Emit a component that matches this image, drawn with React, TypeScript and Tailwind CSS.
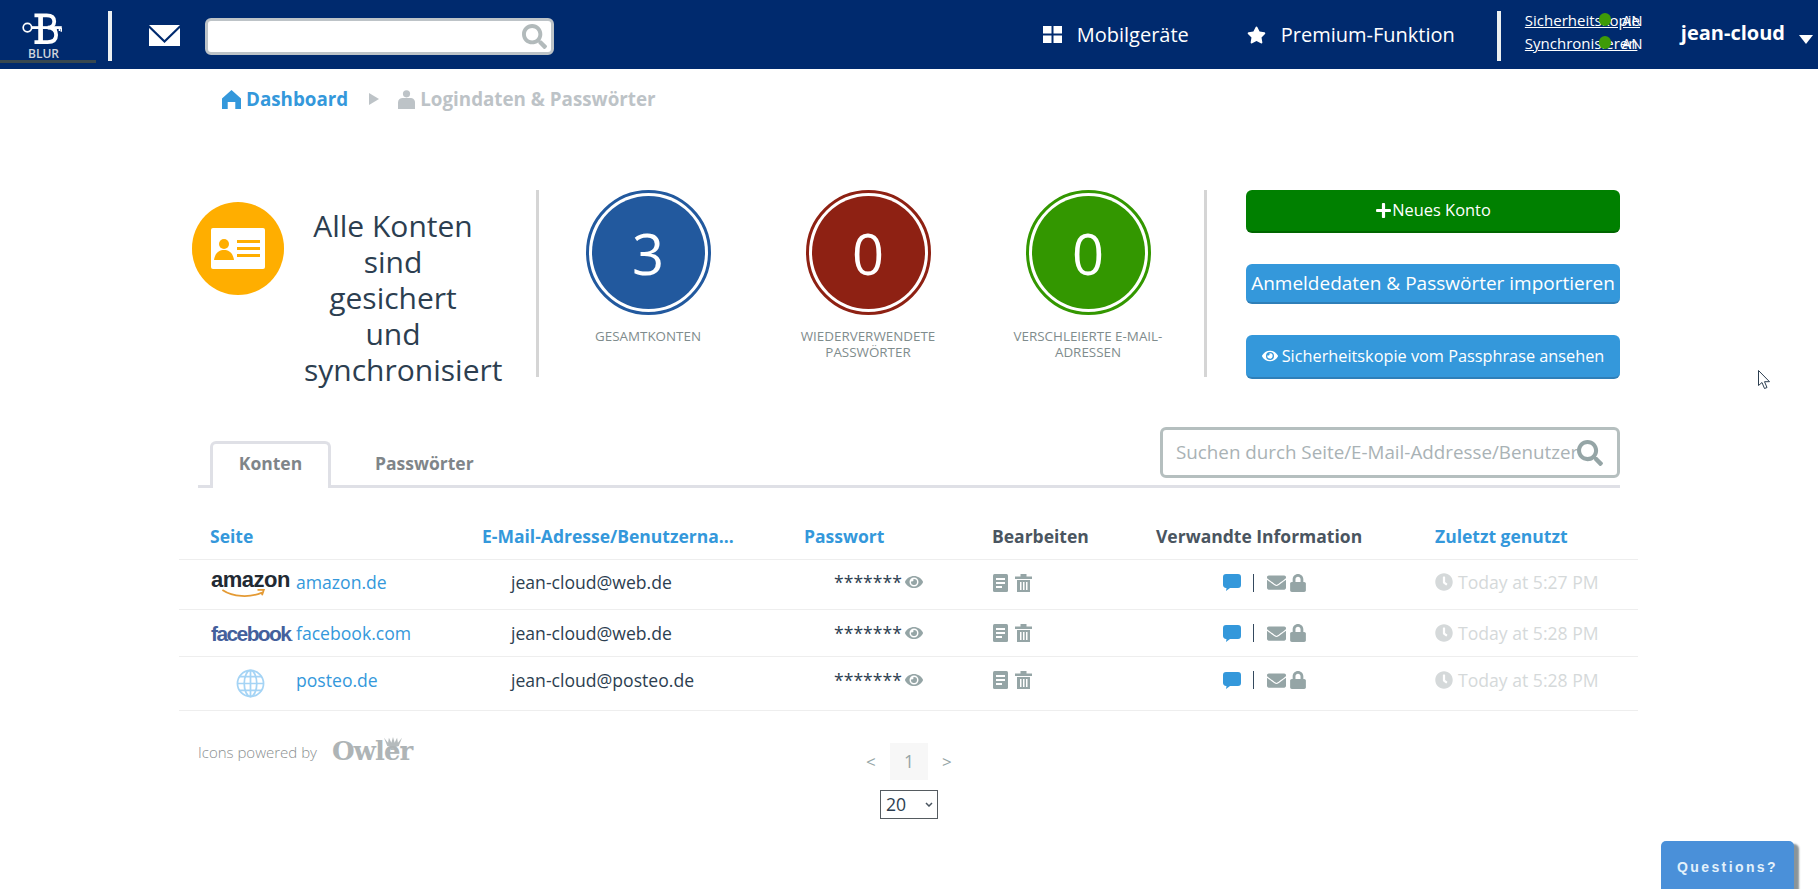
import React from 'react';
import { FaSearch, FaStar, FaEye, FaLock, FaClock, FaEnvelope, FaPlus } from 'react-icons/fa';

const rows = [
  { site: 'amazon.de', mail: 'jean-cloud@web.de', time: 'Today at 5:27 PM', logo: 'amazon', box: 'h-[50px] pb-[4px]' },
  { site: 'facebook.com', mail: 'jean-cloud@web.de', time: 'Today at 5:28 PM', logo: 'facebook', box: 'h-[47px]' },
  { site: 'posteo.de', mail: 'jean-cloud@posteo.de', time: 'Today at 5:28 PM', logo: 'globe', box: 'h-[54px] pb-[7px]' },
];

const stats = [
  { value: '3', label: 'Gesamtkonten', ring: 'border-[#22599e]', fill: 'bg-[#22599e]' },
  { value: '0', label: 'Wiederverwendete Passwörter', ring: 'border-[#8e2113]', fill: 'bg-[#8e2113]' },
  { value: '0', label: 'Verschleierte E-Mail-Adressen', ring: 'border-[#339700]', fill: 'bg-[#339700]' },
];

const BlurLogo = () => (
  <svg viewBox="0 0 42 34" className="mr-[3px] h-[34px] w-[42px]" fill="none" stroke="#fff">
    <circle cx="5.500" cy="15.500" r="4.500" strokeWidth="1.800" />
    <path d="M10 15.500h32" strokeWidth="3" />
    <path d="M36 16v4M39.500 16v3M41.500 16v4" strokeWidth="1.500" />
    <path d="M13 2.500h13c6 0 8 2.500 8 6.500s-3 6.500-7 6.500c6 0 9 3 9 8s-3 7.500-9 7.500H13" strokeWidth="4" />
    <path d="M19.500 2v30" strokeWidth="5" />
  </svg>
);

const HomeIcon = () => (
  <svg viewBox="0 0 20 20" className="h-[19px] w-[19px]" fill="#3498db">
    <path d="M10 0 20 9v11h-6v-7.500H6V20H0V9z" />
  </svg>
);

const UserIcon = () => (
  <svg viewBox="0 0 18 20" className="h-[19px] w-[17px]" fill="#bdc3c7">
    <circle cx="9" cy="4" r="3.800" />
    <path d="M0 20v-7c0-3 2.500-4.500 5-4.500h8c2.500 0 5 1.500 5 4.500v7z" />
  </svg>
);

const WindowsIcon = () => (
  <svg viewBox="0 0 19 17" className="h-[17px] w-[19px]" fill="#fff">
    <path d="M0 0h8.500v7.500H0zM10.500 0H19v7.500h-8.500zM0 9.500h8.500V17H0zM10.500 9.500H19V17h-8.500z" />
  </svg>
);

const MailIcon = () => (
  <svg viewBox="0 0 31 21" className="h-[21px] w-[31px]" fill="#fff">
    <path d="M0 0h31L15.500 15z" />
    <path d="M0 3l15.500 15L31 3v18H0z" />
  </svg>
);

const IdCardIcon = () => (
  <svg viewBox="0 0 54 41" className="h-[41px] w-[54px]">
    <rect width="54" height="41" rx="2" fill="#fff" />
    <circle cx="13" cy="16" r="5" fill="#ffae00" />
    <path d="M3 32c1-7 5-10 10-10s9 3 10 10z" fill="#ffae00" />
    <path d="M26 12h23v3H26zM26 19h23v3H26zM26 26h23v3H26z" fill="#ffae00" />
  </svg>
);

const DocIcon = () => (
  <svg viewBox="0 0 15 18" className="h-[18px] w-[15px]">
    <rect width="15" height="18" rx="1.500" fill="#95a5a6" />
    <path d="M3 4h9v2H3zM3 8h9v2H3zM3 12h6v2H3z" fill="#fff" />
  </svg>
);

const TrashIcon = () => (
  <svg viewBox="0 0 17 18" className="h-[18px] w-[17px]" fill="#95a5a6">
    <path d="M0 2.500h5.500V0h6v2.500H17V5H0zM2 6h13v12H2zM5 8v8h1.500V8zM8 8v8h1.500V8zM11 8v8h1.500V8z" fillRule="evenodd" />
  </svg>
);

const ChatIcon = () => (
  <svg viewBox="0 0 18 17" className="h-[17px] w-[18px]" fill="#3498db">
    <path d="M3 0h12a3 3 0 0 1 3 3v8a3 3 0 0 1-3 3H7l-4 3 .5-3A3 3 0 0 1 0 11V3a3 3 0 0 1 3-3z" />
  </svg>
);

const Globe = () => (
  <svg viewBox="0 0 30 30" className="h-[29px] w-[29px]" fill="none" stroke="#a5d4f5" strokeWidth="1.800">
    <circle cx="15" cy="15" r="13.500" />
    <ellipse cx="15" cy="15" rx="6.500" ry="13.500" />
    <path d="M15 1.500v27M1.500 15h27M3.500 8h23M3.500 22h23" />
  </svg>
);

const SiteLogo = ({ kind }: { kind: string }) => {
  if (kind === 'amazon') {
    return (
      <div className="relative h-[26px] w-[80px]">
        <span className="block font-['Liberation_Sans',sans-serif] text-[22px] font-bold leading-[19px] tracking-[-0.5px] text-[#222a33]">amazon</span>
        <svg viewBox="0 0 50 10" className="absolute left-[10px] top-[19px] h-[9px] w-[46px]" fill="none" stroke="#e49a34" strokeWidth="2">
          <path d="M1 1c12 8 30 9 44 3M40 1h7l-2 6" />
        </svg>
      </div>
    );
  }
  if (kind === 'facebook') {
    return (
      <span className="mt-[6px] block w-[80px] font-['Liberation_Sans',sans-serif] text-[21px] font-bold leading-[24px] tracking-[-1.6px] text-[#44609c]">
        facebook<span className="text-[10px] font-normal">.</span>
      </span>
    );
  }
  return (
    <div className="mt-[7px] flex w-[78px] justify-center">
      <Globe />
    </div>
  );
};

const OwlerLogo = () => (
  <div className="relative h-[28px] w-[84px]">
    <svg viewBox="0 0 22 16" className="absolute left-[54px] top-0 h-[15px] w-[18px]" fill="#b5bbbd">
      <path d="M0 1l5 6 1-6 3 6 2-7 2 7 3-6 1 6 5-6-4 10-3 1-1 4H8l-1-4-3-1z" />
    </svg>
    <span className="absolute bottom-0 left-[2px] font-['DejaVu_Serif',serif] text-[26px] font-bold leading-[26px] tracking-[-1px] text-[#aeb4b6]">Owler</span>
  </div>
);

const Cursor = () => (
  <svg viewBox="0 0 13 20" className="absolute left-[1758px] top-[370px] h-[20px] w-[13px]" fill="#fff" stroke="#2c3e50" strokeWidth="1">
    <path d="M.5.500v15l3.500-3 2.500 6 2.500-1-2.500-5.800h5z" />
  </svg>
);

export default function App() {
  return (
    <div className="relative h-[889px] overflow-hidden bg-white font-['Open_Sans',sans-serif] text-[#2c3e50]">
      {/* Top bar */}
      <header className="flex h-[69px] bg-[#002a6e] text-white">
        <div className="flex h-[63px] w-[96px] flex-col items-center border-b-[3px] border-[#37474f] pr-[9px] pt-[13px]">
          <BlurLogo />
          <span className="mt-[3px] text-[12px] font-semibold leading-[12px] text-[#cfd6dd]">BLUR</span>
        </div>
        <div className="ml-[12px] mt-[11px] h-[50px] w-[4px] bg-[#ecf0f1]" />
        <div className="ml-[37px] mt-[25px]">
          <MailIcon />
        </div>
        <div className="ml-[25px] mt-[18px] flex h-[37px] w-[349px] items-center justify-end rounded-[6px] border-[3px] border-[#bdc3c7] bg-white pr-[4px]">
          <FaSearch className="h-[25px] w-[25px] text-[#b2babb]" />
        </div>
        <div className="ml-auto flex">
          <div className="flex items-center gap-[15px]">
            <WindowsIcon />
            <span className="text-[20px]">Mobilgeräte</span>
          </div>
          <div className="ml-[58px] flex items-center gap-[15px]">
            <FaStar className="h-[18px] w-[19px]" />
            <span className="text-[20px]">Premium-Funktion</span>
          </div>
          <div className="ml-[42px] mt-[11px] h-[50px] w-[4px] bg-[#ecf0f1]" />
          <div className="ml-[24px] mt-[11px] flex flex-col gap-[5px] text-[15px] leading-[18px]">
            <div className="relative w-[118px] whitespace-nowrap">
              <span className="underline">Sicherheitskopie</span>
              <span className="absolute left-[74px] top-[2px] h-[13px] w-[12px] rounded-full bg-[#3e9b08]" />
              <span className="absolute left-[97px] top-0">AN</span>
            </div>
            <div className="relative w-[118px] whitespace-nowrap">
              <span className="underline">Synchronisieren</span>
              <span className="absolute left-[74px] top-[2px] h-[13px] w-[12px] rounded-full bg-[#3e9b08]" />
              <span className="absolute left-[97px] top-0">AN</span>
            </div>
          </div>
          <div className="ml-[38px] mt-[19px] text-[20px] font-bold leading-[27px]">jean-cloud</div>
          <div className="ml-[14px] mr-[5px] mt-[35px] h-0 w-0 border-x-[7px] border-t-[9px] border-x-transparent border-t-white" />
        </div>
      </header>

      {/* Breadcrumb */}
      <nav className="ml-[222px] mt-[19px] flex h-[22px] items-center text-[18.800px] font-bold">
        <HomeIcon />
        <span className="ml-[5px] text-[#3498db]">Dashboard</span>
        <div className="ml-[21px] h-0 w-0 border-y-[6px] border-l-[10px] border-y-transparent border-l-[#bdc3c7]" />
        <div className="ml-[19px]">
          <UserIcon />
        </div>
        <span className="ml-[5px] text-[#bdc3c7]">Logindaten &amp; Passwörter</span>
      </nav>

      <main className="ml-[179px] w-[1459px]">
        {/* Summary */}
        <section className="mt-[80px] flex h-[187px]">
          <div className="ml-[13px] mt-[12px] flex h-[93px] w-[92px] items-center justify-center rounded-full bg-[#ffae00]">
            <IdCardIcon />
          </div>
          <div className="ml-[20px] mt-[18px] w-[178px] text-center text-[30px] leading-[36px]">
            Alle Konten sind gesichert und synchronisiert
          </div>
          <div className="ml-[54px] h-[187px] w-[3px] bg-[#d5d5d5]" />
          <div className="ml-[-1px] flex">
            {stats.map((s, i) => (
              <div key={i} className="flex w-[220px] flex-col items-center">
                <div className={`flex h-[125px] w-[125px] items-center justify-center rounded-full border-[3px] bg-white ${s.ring}`}>
                  <div className={`flex h-[113px] w-[113px] items-center justify-center rounded-full text-[56px] text-white ${s.fill}`}>{s.value}</div>
                </div>
                <div className="mt-[13px] w-[160px] text-center text-[13.400px] uppercase leading-[16px] text-[#7f8c8d]">{s.label}</div>
              </div>
            ))}
          </div>
          <div className="ml-[6px] h-[187px] w-[3px] bg-[#d5d5d5]" />
          <div className="ml-[39px] flex w-[374px] flex-col text-white">
            <button className="flex h-[43px] shrink-0 items-center justify-center rounded-[6px] border-b-2 border-[#006600] bg-[#008000] text-[16.400px]">
              <FaPlus className="h-[17px] w-[17px]" />
              <span>Neues Konto</span>
            </button>
            <button className="mt-[31px] flex h-[40px] shrink-0 items-center justify-center whitespace-nowrap rounded-[6px] border-b-2 border-[#2f7fb8] bg-[#3498db] text-[19px]">
              Anmeldedaten &amp; Passwörter importieren
            </button>
            <button className="mt-[31px] flex h-[44px] shrink-0 items-center justify-center gap-[4px] whitespace-nowrap rounded-[6px] border-b-2 border-[#2f7fb8] bg-[#3498db] text-[16.300px]">
              <FaEye className="h-[16px] w-[16px]" />
              Sicherheitskopie vom Passphrase ansehen
            </button>
          </div>
        </section>

        {/* Tabs */}
        <section className="ml-[19px] mr-[18px] mt-[50px] flex h-[61px] border-b-[3px] border-[#dfe0e6]">
          <div className="ml-[12px] mt-[14px] flex h-[47px] w-[121px] items-center justify-center rounded-t-[6px] border-x-[3px] border-t-[3px] border-[#dfe0e6] bg-white pb-[6px] text-[17.500px] font-bold text-[#7f8589]">Konten</div>
          <div className="ml-[44px] mt-[14px] flex h-[44px] items-center text-[17.500px] font-bold text-[#7f8589]">Passwörter</div>
          <div className="ml-auto flex h-[51px] w-[460px] items-center rounded-[6px] border-[3px] border-[#b5bfbf] bg-white pl-[13px]">
            <span className="w-[401px] shrink-0 whitespace-nowrap text-[18.800px] text-[#a9b2b5]">Suchen durch Seite/E-Mail-Addresse/Benutzer</span>
            <FaSearch className="h-[26px] w-[26px] shrink-0 text-[#95a5a6]" />
          </div>
        </section>

        {/* Table */}
        <section className="mt-[27px] text-[17.600px]">
          <div className="flex h-[45px] items-center border-b border-[#eeeeee] pb-[1px] text-[17.500px] font-bold">
            <div className="ml-[31px] w-[272px] text-[#3498db]">Seite</div>
            <div className="w-[322px] whitespace-nowrap text-[#3498db]">E-Mail-Adresse/Benutzerna...</div>
            <div className="w-[188px] text-[#3498db]">Passwort</div>
            <div className="w-[164px] text-[#4a5560]">Bearbeiten</div>
            <div className="w-[279px] text-[#4a5560]">Verwandte Information</div>
            <div className="text-[#3498db]">Zuletzt genutzt</div>
          </div>
          {rows.map((r) => (
            <div key={r.site} className={`flex items-center border-b border-[#eeeeee] ${r.box}`}>
              <div className="ml-[32px] w-[85px]">
                <SiteLogo kind={r.logo} />
              </div>
              <div className="w-[215px] text-[#3498db]">{r.site}</div>
              <div className="w-[323px]">{r.mail}</div>
              <div className="flex w-[159px] items-center gap-[4px]">
                <span className="w-[67px]">*******</span>
                <FaEye className="h-[18px] w-[18px] text-[#95a5a6]" />
              </div>
              <div className="flex w-[230px] items-center gap-[7px]">
                <DocIcon />
                <TrashIcon />
              </div>
              <div className="flex w-[212px] items-center">
                <ChatIcon />
                <span className="ml-[12px] h-[18px] w-px bg-[#34495e]" />
                <FaEnvelope className="ml-[13px] h-[19px] w-[19px] text-[#95a5a6]" />
                <FaLock className="ml-[3px] h-[18px] w-[18px] text-[#95a5a6]" />
              </div>
              <div className="flex items-center gap-[5px] text-[#d5d9da]">
                <FaClock className="h-[18px] w-[18px]" />
                <span>{r.time}</span>
              </div>
            </div>
          ))}
        </section>

        {/* Footer of the table */}
        <section className="relative mt-[25px] flex">
          <div className="ml-[19px] flex items-start gap-[13px] text-[15px] font-light text-[#8a8f90]">
            <span className="mt-[5px]">Icons powered by</span>
            <OwlerLogo />
          </div>
          <div className="absolute left-[687px] top-[7px] flex flex-col items-center text-[#95a5a6]">
            <div className="flex h-[37px] items-center">
              <span className="w-[24px] text-[17px]">&lt;</span>
              <span className="flex h-[37px] w-[38px] items-center justify-center bg-[#f7f7f7] text-[17.600px]">1</span>
              <span className="ml-[14px] w-[10px] text-[17px]">&gt;</span>
            </div>
            <div className="relative mt-[10px] h-[29px] w-[58px]">
              <select defaultValue="20" className="h-[29px] w-[58px] appearance-none border border-[#555b60] bg-white pl-[5px] text-[17.600px] text-[#2c3e50]">
                <option>20</option>
              </select>
              <svg viewBox="0 0 8 5" className="absolute left-[45px] top-[12px] h-[5px] w-[8px]" fill="none" stroke="#4a5560" strokeWidth="1.500">
                <path d="M1 1l3 3 3-3" />
              </svg>
            </div>
          </div>
        </section>
      </main>

      <Cursor />

      {/* Floating help tab */}
      <div className="absolute left-[1661px] top-[841px] flex h-[60px] w-[133px] justify-center rounded-t-[5px] bg-[#4a90d9] pt-[17px] font-['Liberation_Sans',sans-serif] text-[14px] font-bold leading-[18px] tracking-[2.400px] text-[#e3f1fb] shadow-[5px_3px_2px_#8b9498]">
        Questions?
      </div>
    </div>
  );
}
